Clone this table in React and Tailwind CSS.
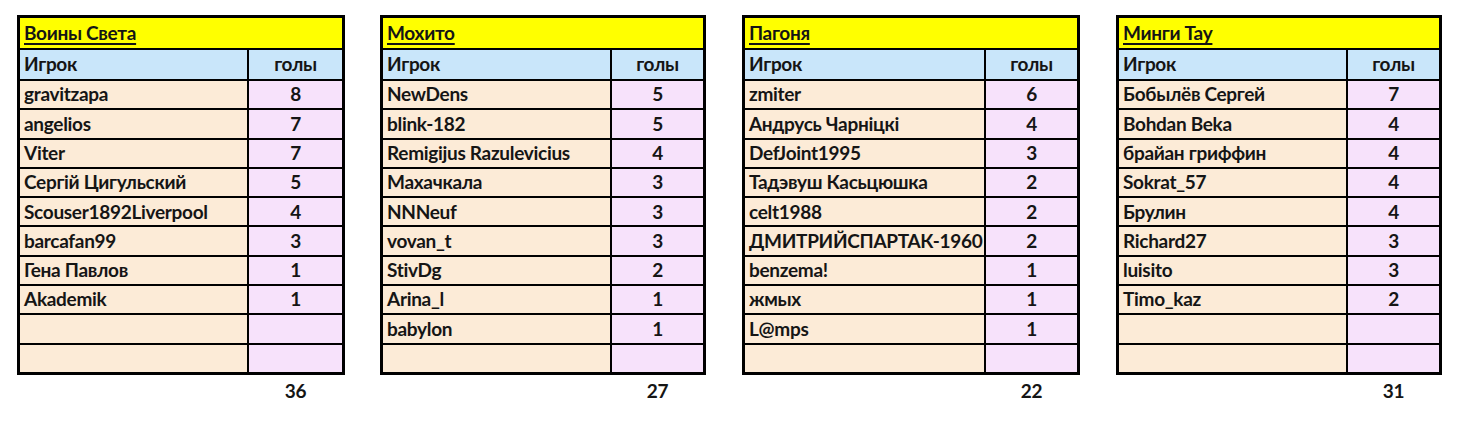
import React from 'react';

const teams = [
  {
    name: 'Воины Света',
    nameW: 'w-[229px]',
    total: 36,
    rows: [
      ['gravitzapa', 8],
      ['angelios', 7],
      ['Viter', 7],
      ['Сергій Цигульский', 5],
      ['Scouser1892Liverpool', 4],
      ['barcafan99', 3],
      ['Гена Павлов', 1],
      ['Akademik', 1],
    ],
  },
  {
    name: 'Мохито',
    nameW: 'w-[229px]',
    total: 27,
    rows: [
      ['NewDens', 5],
      ['blink-182', 5],
      ['Remigijus Razulevicius', 4],
      ['Махачкала', 3],
      ['NNNeuf', 3],
      ['vovan_t', 3],
      ['StivDg', 2],
      ['Arina_l', 1],
      ['babylon', 1],
    ],
  },
  {
    name: 'Пагоня',
    nameW: 'w-[241px]',
    total: 22,
    rows: [
      ['zmiter', 6],
      ['Андрусь Чарніцкі', 4],
      ['DefJoint1995', 3],
      ['Тадэвуш Касьцюшка', 2],
      ['celt1988', 2],
      ['ДМИТРИЙСПАРТАК-1960', 2],
      ['benzema!', 1],
      ['жмых', 1],
      ['L@mps', 1],
    ],
  },
  {
    name: 'Минги Тау',
    nameW: 'w-[229px]',
    total: 31,
    rows: [
      ['Бобылёв Сергей', 7],
      ['Bohdan Beka', 4],
      ['брайан гриффин', 4],
      ['Sokrat_57', 4],
      ['Брулин', 4],
      ['Richard27', 3],
      ['luisito', 3],
      ['Timo_kaz', 2],
    ],
  },
];

function TeamTable({ team }) {
  const rows = [...team.rows];
  while (rows.length < 10) rows.push(['', '']);
  return (
    <div className="flex flex-col">
      <div className="border-[3px] border-black flex flex-col">
        <div className="h-[30px] bg-[#ffff00] flex items-center px-[4px]">
          <span className="underline underline-offset-[3px] decoration-2">{team.name}</span>
        </div>
        <div className="flex h-[31px] border-t-2 border-black bg-[#c9e6fa]">
          <div className={`${team.nameW} border-r-2 border-black flex items-center px-[4px]`}>Игрок</div>
          <div className="flex-1 flex items-center justify-center">голы</div>
        </div>
        {rows.map(([player, goals], i) => (
          <div key={i} className="flex h-[29.3px] border-t-2 border-black">
            <div className={`${team.nameW} border-r-2 border-black bg-[#fcebd7] flex items-center px-[4px] whitespace-nowrap`}>
              {player}
            </div>
            <div className="flex-1 bg-[#f7e2fb] flex items-center justify-center">{goals}</div>
          </div>
        ))}
      </div>
      <div className="flex h-[32px] items-center">
        <div className={`${team.nameW} shrink-0`} />
        <div className="flex-1 text-center">{team.total}</div>
      </div>
    </div>
  );
}

export default function App() {
  return (
    <div
      className="w-[1460px] h-[424px] bg-white text-[#151515] font-bold text-[19px] tracking-[-0.3px] pt-[15px] pl-[17px] flex items-start"
      style={{ fontFamily: 'Lato, "Open Sans", sans-serif' }}
    >
      <div className="w-[328px]"><TeamTable team={teams[0]} /></div>
      <div className="w-[326px] ml-[35px]"><TeamTable team={teams[1]} /></div>
      <div className="w-[338px] ml-[36px]"><TeamTable team={teams[2]} /></div>
      <div className="w-[326px] ml-[36px]"><TeamTable team={teams[3]} /></div>
    </div>
  );
}
